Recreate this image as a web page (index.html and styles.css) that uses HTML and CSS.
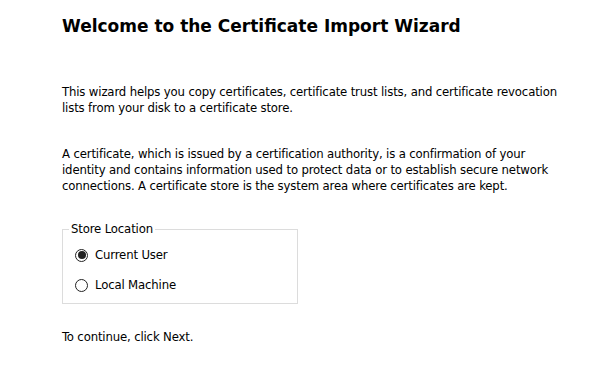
FILE: index.html
```html
<!DOCTYPE html>
<html lang="en">
<head>
    <meta charset="UTF-8">
    <title>Certificate Import Wizard</title>
    <link rel="stylesheet" href="styles.css">
</head>
<body>

<div class="wizard">
    <h1>Welcome to the Certificate Import Wizard</h1>

    <p class="intro">This wizard helps you copy certificates, certificate trust lists, and certificate revocation lists from your disk to a certificate store.</p>

    <p class="about">A certificate, which is issued by a certification authority, is a confirmation of your identity and contains information used to protect data or to establish secure network connections. A certificate store is the system area where certificates are kept.</p>

    <fieldset class="store">
        <legend>Store Location</legend>
        <label class="option">
            <span class="radio checked"></span>
            <span>Current User</span>
        </label>
        <label class="option">
            <span class="radio"></span>
            <span>Local Machine</span>
        </label>
    </fieldset>

    <p class="next">To continue, click Next.</p>
</div>

</body>
</html>
```

FILE: styles.css
```css
body {
    margin: 0;
    background: #fff;
    color: #000;
    font-family: "DejaVu Sans Condensed", "DejaVu Sans", sans-serif;
    font-size: 13px;
    line-height: 16px;
    letter-spacing: -0.15px;
}
.wizard {
    padding: 14px 0 0 62px;
    width: 505px;
}
h1 {
    margin: 0;
    font-family: "DejaVu Sans", sans-serif;
    font-size: 17px;
    line-height: 24px;
    font-weight: bold;
    letter-spacing: 0;
}
p {
    margin: 0;
}
.intro {
    margin-top: 46px;
}
.about {
    margin-top: 30px;
}
.store {
    margin: 27px 0 0 0;
    width: 236px;
    height: 83px;
    box-sizing: border-box;
    border: 1px solid #dcdcdc;
    padding: 0 0 0 6px;
}
.store legend {
    padding: 0 2px;
}
.option {
    display: flex;
    align-items: center;
    gap: 7px;
    height: 30px;
    margin-left: 6px;
}
.option:first-of-type {
    margin-top: 3px;
}
.radio {
    width: 11px;
    height: 11px;
    border: 1px solid #222;
    border-radius: 50%;
    display: flex;
    align-items: center;
    justify-content: center;
}
.radio.checked::after {
    content: "";
    width: 8px;
    height: 8px;
    border-radius: 50%;
    background: #222;
}
.next {
    margin-top: 25px;
}
```
